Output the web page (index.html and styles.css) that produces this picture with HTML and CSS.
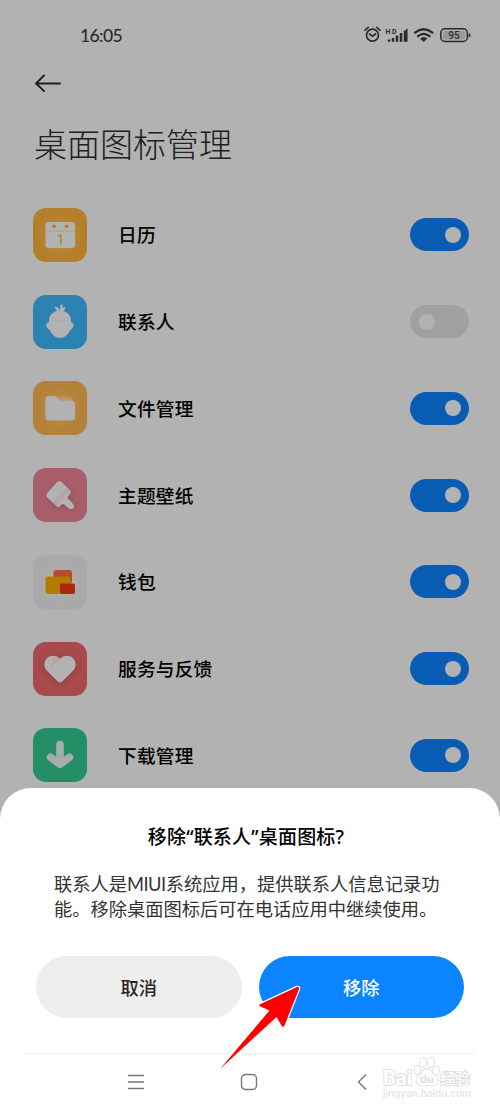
FILE: index.html
```html
<!DOCTYPE html>
<html lang="zh-CN">
<head>
    <meta charset="UTF-8">
    <meta name="viewport" content="width=device-width, initial-scale=1.0">
    <title>桌面图标管理</title>
    <link rel="stylesheet" href="styles.css">
</head>
<body>
<div class="screen">
    <!-- Status bar -->
    <div class="status-bar">
        <span class="time">16:05</span>
        <svg class="status-icons" width="110" height="20" viewBox="0 0 110 20" fill="none" stroke="#2b2b2b">
            <circle cx="11.500" cy="10.200" r="6" stroke-width="1.700"/>
            <path d="M8.500 9l3 2.300 3-2.300M4 5.200l3.300-2.800M19 5.200l-3.300-2.800" stroke-width="1.700" stroke-linecap="round"/>
            <text class="hd" x="24.500" y="8.500" textLength="11">HD</text>
            <path d="M28 14.500v2.300M32 13v3.800M36 10.500v6.300M40 8v8.800M44 5.500v11.300" stroke-width="2.500" stroke-linecap="butt"/>
            <path d="M45.800 3.700v13" stroke-width="1.500"/>
            <path d="M54 7.600Q62.700 .800 71.400 7.600M57 11.200Q62.700 6.600 68.400 11.200" stroke-width="2.300" stroke-linecap="round"/>
            <path d="M59 13.400Q62.700 10.400 66.400 13.400L62.700 17z" fill="#2b2b2b" stroke="none"/>
            <rect x="79.800" y="3.800" width="26.500" height="12.700" rx="4" stroke-width="1.500"/>
            <rect x="82" y="6" width="22" height="8.500" rx="2" fill="#999" stroke="none"/>
            <path d="M108.500 8.500v3.500" stroke-width="1.700"/>
            <text class="battery" x="93" y="13.800" text-anchor="middle">95</text>
        </svg>
    </div>

    <div class="top-bar">
        <svg width="26" height="18" viewBox="0 0 26 18" fill="none" stroke="#202020" stroke-width="1.9" stroke-linecap="round" stroke-linejoin="round">
            <path d="M25 9.500H1M9 1.500L1 9.500l8 7.500"/>
        </svg>
    </div>
    <h1>桌面图标管理</h1>

    <!-- App list -->
    <ul class="app-list">
        <li>
            <svg class="app-icon" viewBox="0 0 54 54">
                <defs>
                    <radialGradient id="glow"><stop offset=".45" stop-color="#d8bc84" stop-opacity=".55"/><stop offset="1" stop-color="#d8bc84" stop-opacity="0"/></radialGradient>
                    <linearGradient id="brush" x1="0" y1="0" x2="1" y2="1"><stop offset=".48" stop-color="#b2b2b2"/><stop offset=".5" stop-color="#b2a2a4"/><stop offset=".68" stop-color="#b2b2b2"/></linearGradient>
                    <linearGradient id="fold" x1="0" y1="0" x2="1" y2="1"><stop offset=".2" stop-color="#b2b2b2"/><stop offset=".8" stop-color="#b49492"/></linearGradient>
                </defs>
                <rect width="54" height="54" rx="13" fill="#b37f2a"/>
                <circle cx="27" cy="27" r="22" fill="url(#glow)" opacity=".3"/>
                <rect x="12.500" y="14" width="29.500" height="26" rx="3.500" fill="#b2b2b2"/>
                <path d="M12.500 23H42" stroke="#b8a17c" stroke-width="1.300"/>
                <circle cx="21" cy="18.300" r="1.900" fill="#b37f2a"/>
                <circle cx="33.500" cy="18.300" r="1.900" fill="#b37f2a"/>
                <path d="M24.800 28.300l3-1.300v9.500" fill="none" stroke="#b37f2a" stroke-width="1.400"/>
            </svg>
            <span class="name">日历</span>
            <span class="toggle on"></span>
        </li>
        <li>
            <svg class="app-icon" viewBox="0 0 54 54">
                <rect width="54" height="54" rx="13" fill="#2c82b0"/>
                <path d="M16 25.500C16 12.500 38 12.500 38 25.500l.3 2c3.200-.5 3.200 6.500-.8 7C35.500 39.500 31 43 27 43s-8.500-3.500-10.500-8.500c-4-.5-4-7.500-.8-7z" fill="#b2b2b2"/>
                <path d="M27 17c-.5-4 .2-6.500 2-8.500 1.500 2.500.8 5.500-2 8.500zm0 0c-3-.3-5-2-5.200-5.400 3.200.5 5 2.300 5.200 5.400zm0-.2c.3-3 2.300-4.600 5.500-4.600-.3 3-2.300 4.500-5.500 4.600z" fill="#b2b2b2"/>
                <path d="M16 25.800h22" stroke="#a0adb3" stroke-width="1.200"/>
            </svg>
            <span class="name">联系人</span>
            <span class="toggle"></span>
        </li>
        <li>
            <svg class="app-icon" viewBox="0 0 54 54">
                <rect width="54" height="54" rx="13" fill="#b38138"/>
                <circle cx="27" cy="27" r="22" fill="url(#glow)" opacity=".3"/>
                <path d="M22 16.500h14.500q2.500 0 2.500 2.500v3H22z" fill="#b99a6b"/>
                <path d="M12.500 18q0-3 3-3h6.200q1.500 0 2.300 1.200l1.300 2.300q.7 1.300 2.300 1.300H38.500q3.500 0 3.500 3.500V36q0 3.500-3.500 3.500H16q-3.500 0-3.500-3.500z" fill="#b2b2b2"/>
            </svg>
            <span class="name">文件管理</span>
            <span class="toggle on"></span>
        </li>
        <li>
            <svg class="app-icon" viewBox="0 0 54 54">
                <rect width="54" height="54" rx="13" fill="#a95f6a"/>
                <path class="drop" d="M24 14.200q2.500-2.200 5 0l8 8q1.700 2-.2 4l-1.700 2q-1 1.500.3 2.700l5 5.300q1.500 2.500-.4 4.300-2.400 1.800-4.500-.3L31.200 36.500q-1.200-1.200-2.500 0l-1.500 1.500q-2 1.800-4 0l-9-8.500q-1.800-2.300 0-4.500z" fill="url(#brush)"/>
            </svg>
            <span class="name">主题壁纸</span>
            <span class="toggle on"></span>
        </li>
        <li>
            <svg class="app-icon" viewBox="0 0 54 54">
                <rect width="54" height="54" rx="13" fill="#a9a9a9"/>
                <circle cx="27" cy="28" r="20" fill="url(#glow)" opacity=".5"/>
                <rect x="20.500" y="15" width="18.500" height="14" rx="3" fill="#b54b2b"/>
                <rect x="12.500" y="21.500" width="25" height="17.500" rx="3" fill="#b57a00"/>
                <rect x="27" y="28.500" width="15" height="10.500" rx="2" fill="#a9260f"/>
            </svg>
            <span class="name">钱包</span>
            <span class="toggle on"></span>
        </li>
        <li>
            <svg class="app-icon" viewBox="0 0 54 54">
                <rect width="54" height="54" rx="13" fill="#a84a4b"/>
                <path class="drop" d="M27 16.800c4-4.200 10.500-4.200 13.800.2 3 4.300 2.200 8.500-1 12L29.500 39.300q-2.500 2.300-5 0L14.200 29c-3.200-3.500-4-7.700-1-12 3.300-4.400 9.800-4.400 13.800-.2z" fill="#b2b2b2"/>
                <path d="M18 25.500l9-8.700c-2.200-2.400-4.500-3-6.500-3.100z" fill="url(#fold)"/>
            </svg>
            <span class="name">服务与反馈</span>
            <span class="toggle on"></span>
        </li>
        <li>
            <svg class="app-icon" viewBox="0 0 54 54">
                <rect width="54" height="54" rx="13" fill="#248f67"/>
                <path d="M27 16.500V34M17.500 29.200L27 36.300l9.500-7.100" fill="none" stroke="#a6aeaa" stroke-width="7.600" stroke-linecap="round" stroke-linejoin="round"/>
                <path d="M23.200 26l4.800 5 2.800-2v-3z" fill="#8fab9f" opacity=".4"/>
            </svg>
            <span class="name">下载管理</span>
            <span class="toggle on"></span>
        </li>
    </ul>

    <!-- Confirm sheet -->
    <div class="sheet">
        <h2>移除<span class="latin">“</span>联系人<span class="latin">”</span>桌面图标<span class="latin">?</span></h2>
        <p>联系人是<span class="miui">MIUI</span>系统应用，提供联系人信息记录功<br>能。移除桌面图标后可在电话应用中继续使用。</p>
        <div class="buttons">
            <button type="button" class="cancel">取消</button>
            <button type="button" class="remove">移除</button>
        </div>
        <div class="nav-bar">
            <svg width="18" height="18" viewBox="0 0 18 18"><path d="M1 2.500h16M1 9h16M1 15.500h16"/></svg>
            <svg width="18" height="18" viewBox="0 0 18 18"><rect x="1.500" y="1.500" width="15" height="15" rx="4"/></svg>
            <svg width="18" height="18" viewBox="0 0 18 18"><path d="M13 1.500L5.500 9l7.500 7.500"/></svg>
        </div>
    </div>

    <svg class="pointer" width="90" height="92" viewBox="0 0 90 92">
        <path d="M2 85L51.500 26.500 42.500 22.500q-2.500-1.500 0-2.500L79 3q2.500-.5 2 2L66.500 41.500q-1.500 2.500-3 0L58.500 33z" fill="#ff0000" stroke="#fff" stroke-width="2.500" stroke-linejoin="round" paint-order="stroke"/>
    </svg>

    <svg class="watermark" width="96" height="48" viewBox="0 0 96 48">
        <g fill="#fff" stroke="#dedede" stroke-width="1.800" paint-order="stroke">
            <text class="wm-brand" x="1" y="32" textLength="29" lengthAdjust="spacingAndGlyphs">Bai</text>
            <ellipse cx="35.500" cy="17" rx="3" ry="4"/>
            <ellipse cx="41" cy="9.500" rx="3.300" ry="4.500"/>
            <ellipse cx="49" cy="9.500" rx="3.300" ry="4.500"/>
            <ellipse cx="54" cy="17.500" rx="3" ry="4"/>
            <path d="M45 16q3 0 6 5c3 3 5 4 4.500 8-1 3-4 4-10.500 3-6.500 1-9.500 0-10.500-3-.5-4 1.500-5 4.500-8q3-5 6-5z"/>
            <text class="wm-cn" x="58" y="31" textLength="30" lengthAdjust="spacingAndGlyphs">经验</text>
        </g>
        <text class="wm-du" x="38" y="30" textLength="14" lengthAdjust="spacingAndGlyphs">du</text>
        <text class="wm-url" x="1" y="44" textLength="88">jingyan.baidu.com</text>
    </svg>
</div>
</body>
</html>
```
FILE: styles.css
```css
* {
    box-sizing: border-box;
}
body {
    margin: 0;
    font-family: "Noto Sans CJK SC", "Noto Sans", sans-serif;
    background-color: #b2b2b2;
}
.screen {
    position: relative;
    width: 500px;
    height: 1111px;
    overflow: hidden;
    display: flex;
    flex-direction: column;
}
.status-bar {
    display: flex;
    justify-content: space-between;
    height: 45px;
    padding: 25px 29px 0 80px;
    flex: none;
}
.time {
    font-family: Lato, sans-serif;
    font-size: 17.5px;
    font-weight: 500;
    line-height: 21px;
    color: #2b2b2b;
    letter-spacing: -0.6px;
}
.status-icons text {
    fill: #2b2b2b;
    stroke: none;
    font-family: Roboto, sans-serif;
    font-weight: 700;
}
.status-icons .hd {
    font-size: 7px;
}
.status-icons .battery {
    font-size: 10px;
    font-weight: 500;
}
.top-bar {
    flex: none;
    height: 47px;
    padding: 29px 0 0 35px;
}
.top-bar svg {
    display: block;
}
h1 {
    flex: none;
    margin: 27px 0 2px 34px;
    font-size: 33px;
    font-weight: 300;
    line-height: 48px;
    color: #202020;
}
.app-list {
    flex: none;
    list-style: none;
    margin: 0;
    padding: 23px 31px 0 33px;
    height: 619px;
}
.app-list li {
    display: flex;
    align-items: center;
    height: 86.75px;
    padding-bottom: 1px;
}
.app-icon {
    width: 54px;
    height: 54px;
}
.drop {
    filter: drop-shadow(0 1px 3px rgba(90, 30, 30, 0.3));
}
.name {
    flex: 1;
    margin-left: 31px;
    padding-bottom: 2px;
    font-size: 18.7px;
    font-weight: 500;
    letter-spacing: 0.2px;
    color: #000;
}
.toggle {
    width: 59px;
    height: 33px;
    padding: 8.5px;
    border-radius: 17px;
    background-color: #a0a0a0;
}
.toggle::before {
    content: "";
    display: block;
    width: 16px;
    height: 16px;
    border-radius: 50%;
    background-color: #b2b2b2;
}
.toggle.on {
    background-color: #095cb4;
}
.toggle.on::before {
    margin-left: auto;
}
.sheet {
    flex: none;
    height: 323px;
    padding-top: 33px;
    border-radius: 31px 31px 0 0;
    background-color: #fff;
}
.sheet h2 {
    height: 30px;
    margin: 0;
    padding-right: 8px;
    font-size: 19px;
    font-weight: 500;
    line-height: 30px;
    letter-spacing: 0.2px;
    text-align: center;
    color: #000;
}
.latin {
    font-family: "Noto Sans", sans-serif;
    line-height: 1;
}
.sheet p {
    height: 49px;
    margin: 20px 0 0 54px;
    font-size: 18.3px;
    line-height: 24.5px;
    letter-spacing: -0.03px;
    white-space: nowrap;
    color: #333;
}
.miui {
    font-family: Lato, sans-serif;
    line-height: 1;
    letter-spacing: -0.5px;
}
.buttons {
    display: flex;
    gap: 17px;
    margin-top: 36px;
    padding: 0 36px;
}
button {
    flex: 1;
    height: 62px;
    padding: 0 0 1px;
    border: none;
    border-radius: 31px;
    font-family: inherit;
    font-size: 18.3px;
    font-weight: 500;
    cursor: pointer;
}
.cancel {
    background-color: #eee;
    color: #262626;
}
.remove {
    background-color: #0d84ff;
    color: #fff;
}
.nav-bar {
    display: flex;
    justify-content: space-between;
    margin: 35px 25px 0 23px;
    padding: 19px 104px 0;
    border-top: 1px solid #eee;
}
.nav-bar svg {
    fill: none;
    stroke: #777;
    stroke-width: 1.4;
}
.pointer {
    position: absolute;
    left: 218px;
    top: 984px;
}
.watermark {
    position: absolute;
    left: 382px;
    top: 1053px;
    font-family: Inter, sans-serif;
}
.wm-brand {
    font-size: 20px;
    font-weight: 700;
}
.wm-du {
    font-size: 11px;
    font-weight: 700;
    fill: #dedede;
}
.wm-cn {
    font-family: "Noto Sans CJK SC", sans-serif;
    font-size: 15px;
    font-weight: 500;
}
.wm-url {
    font-size: 10px;
    font-weight: 500;
    fill: #e4e4e4;
}
```
